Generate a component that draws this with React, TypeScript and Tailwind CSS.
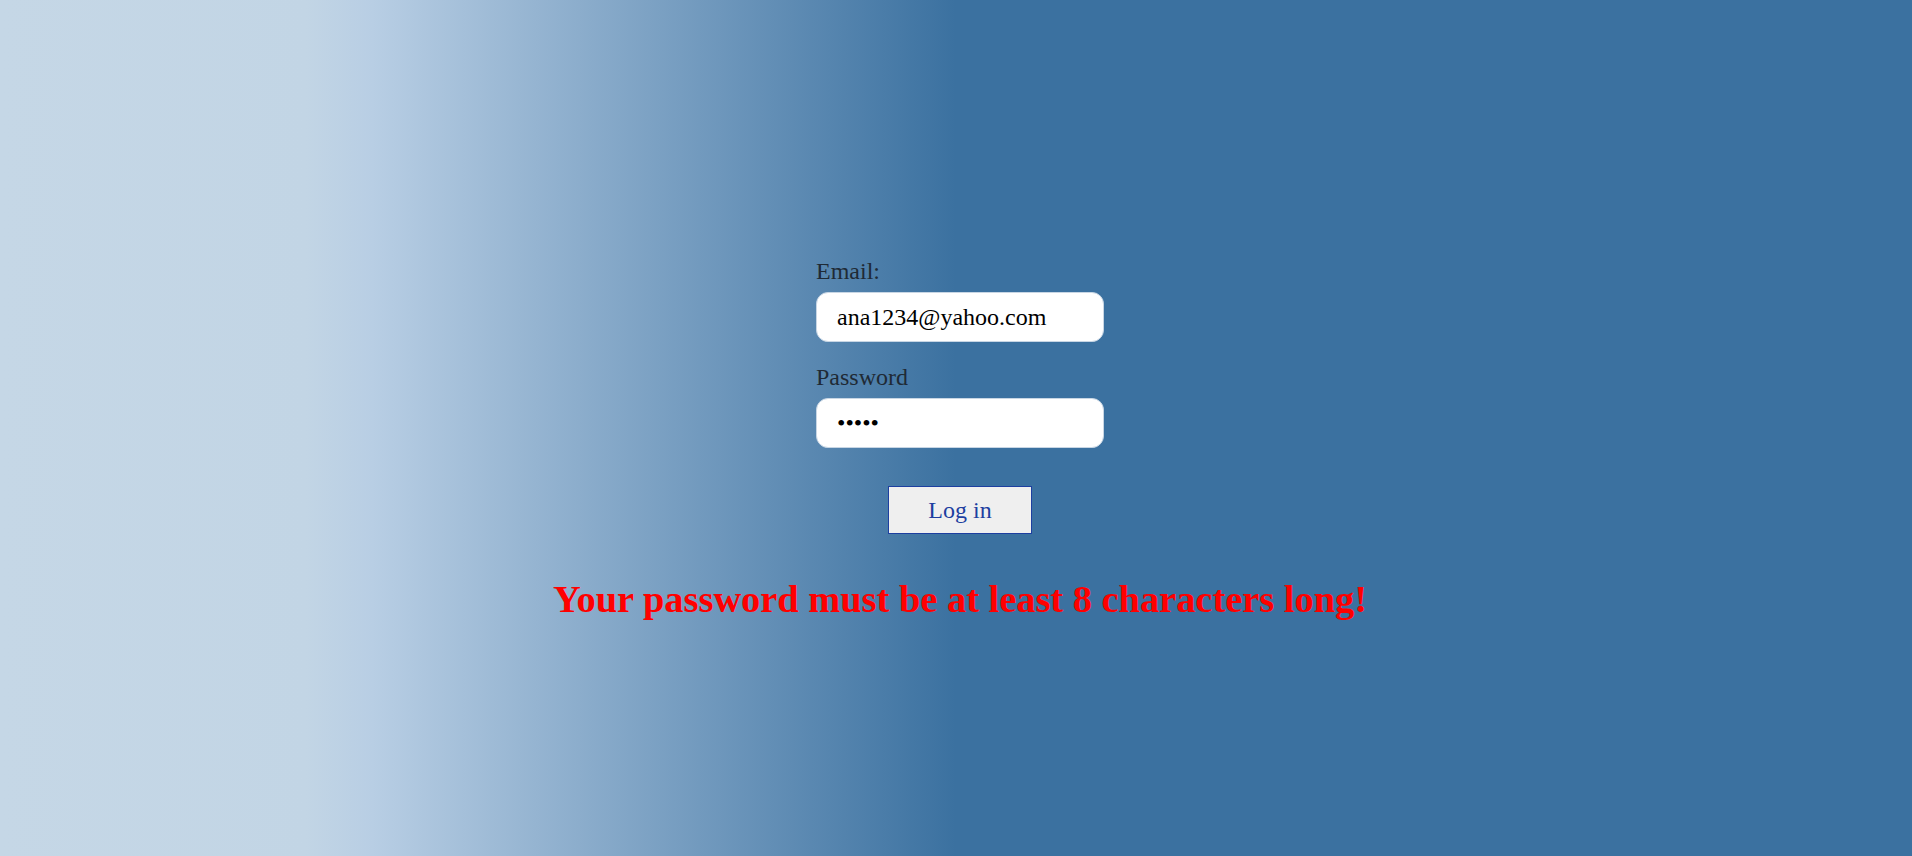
import React from "react";

export default function App() {
  return (
    <div
      className="w-full h-[856px] overflow-hidden bg-[linear-gradient(to_right,#c5d7e6_0%,#c2d5e5_16%,#b8cee4_19.5%,#3b71a0_50%,#3b71a0_100%)] flex flex-col items-center pt-[257px] pl-[8px]"
      style={{ fontFamily: '"Liberation Serif", "Times New Roman", serif' }}
    >
      <form className="flex flex-col w-[288px]" onSubmit={(e) => e.preventDefault()}>
        <label className="text-[24px] leading-[28px] text-[#1f2a35]">Email:</label>
        <input
          type="text"
          defaultValue="ana1234@yahoo.com"
          className="mt-[7px] h-[50px] w-[288px] rounded-[12px] border border-[#c8d6e4] bg-white px-[20px] text-[24px] text-black outline-none"
          style={{ fontFamily: '"Liberation Serif", "Times New Roman", serif' }}
        />
        <label className="mt-[21px] text-[24px] leading-[28px] text-[#1f2a35]">Password</label>
        <input
          type="password"
          defaultValue="12345"
          className="mt-[7px] h-[50px] w-[288px] rounded-[12px] border border-[#c8d6e4] bg-white px-[20px] text-[24px] text-black outline-none"
          style={{ fontFamily: '"Liberation Serif", "Times New Roman", serif' }}
        />
        <div className="flex justify-center mt-[38px]">
          <button
            type="submit"
            className="w-[144px] h-[48px] border border-[#1d3fa0] bg-[#efefef] text-[24px] text-[#1d3fa0]"
            style={{ fontFamily: '"Liberation Serif", "Times New Roman", serif' }}
          >
            Log in
          </button>
        </div>
      </form>
      <h1 className="mt-[43px] text-[38.4px] leading-[44px] font-bold text-[#ff0000]">
        Your password must be at least 8 characters long!
      </h1>
    </div>
  );
}
